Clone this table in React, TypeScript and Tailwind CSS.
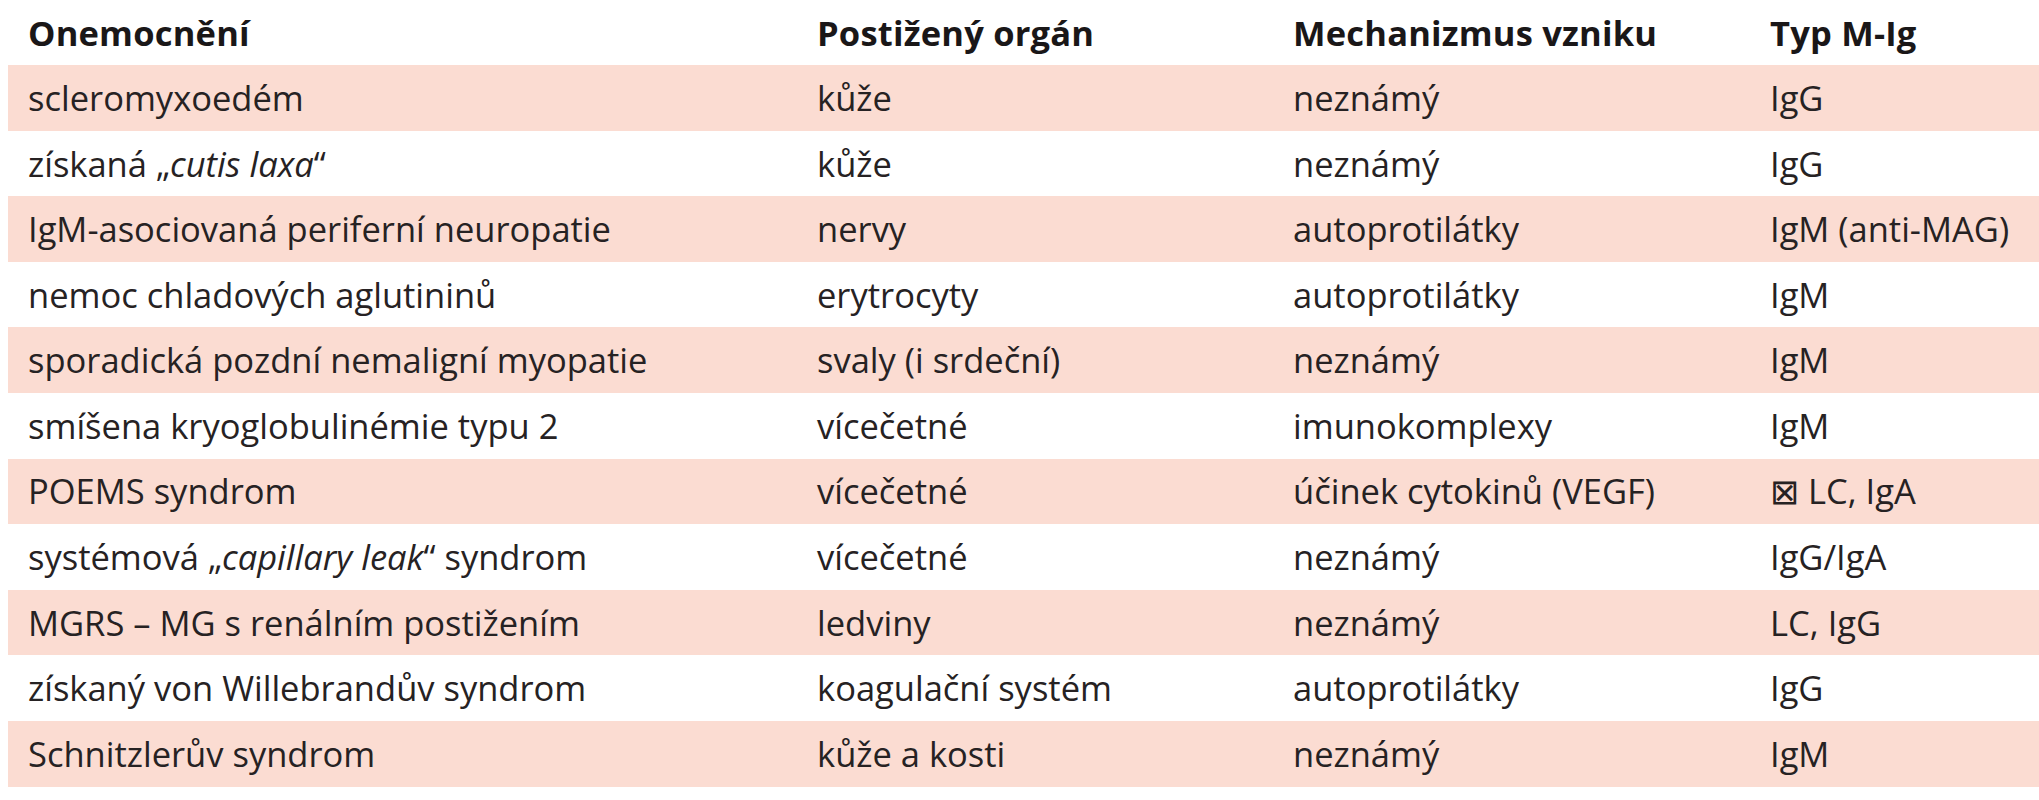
import React from 'react';

type Row = {
  disease: React.ReactNode;
  organ: string;
  mechanism: string;
  type: string;
};

const rows: Row[] = [
  { disease: 'scleromyxoedém', organ: 'kůže', mechanism: 'neznámý', type: 'IgG' },
  {
    disease: (
      <>
        získaná „<i>cutis laxa</i>“
      </>
    ),
    organ: 'kůže',
    mechanism: 'neznámý',
    type: 'IgG',
  },
  { disease: 'IgM-asociovaná periferní neuropatie', organ: 'nervy', mechanism: 'autoprotilátky', type: 'IgM (anti-MAG)' },
  { disease: 'nemoc chladových aglutininů', organ: 'erytrocyty', mechanism: 'autoprotilátky', type: 'IgM' },
  { disease: 'sporadická pozdní nemaligní myopatie', organ: 'svaly (i srdeční)', mechanism: 'neznámý', type: 'IgM' },
  { disease: 'smíšena kryoglobulinémie typu 2', organ: 'vícečetné', mechanism: 'imunokomplexy', type: 'IgM' },
  { disease: 'POEMS syndrom', organ: 'vícečetné', mechanism: 'účinek cytokinů (VEGF)', type: '⊠ LC, IgA' },
  {
    disease: (
      <>
        systémová „<i>capillary leak</i>“ syndrom
      </>
    ),
    organ: 'vícečetné',
    mechanism: 'neznámý',
    type: 'IgG/IgA',
  },
  { disease: 'MGRS – MG s renálním postižením', organ: 'ledviny', mechanism: 'neznámý', type: 'LC, IgG' },
  { disease: 'získaný von Willebrandův syndrom', organ: 'koagulační systém', mechanism: 'autoprotilátky', type: 'IgG' },
  { disease: 'Schnitzlerův syndrom', organ: 'kůže a kosti', mechanism: 'neznámý', type: 'IgM' },
];

const cols = 'grid grid-cols-[789px_476px_477px_1fr]';

export default function App() {
  return (
    <div className="w-[2039px] h-[800px] bg-white pl-2 font-['Open_Sans','Liberation_Sans',sans-serif] text-[34.5px] text-[#262223]">
      <div className={`${cols} h-[65px] items-center font-bold tracking-[0.2px] text-[#1a1718]`}>
        <div className="pl-5">Onemocnění</div>
        <div className="pl-5">Postižený orgán</div>
        <div className="pl-5">Mechanizmus vzniku</div>
        <div className="pl-5">Typ M-Ig</div>
      </div>
      {rows.map((row, i) => (
        <div
          key={i}
          className={`${cols} h-[65.6px] items-center ${i % 2 === 0 ? 'bg-[#fbdcd2]' : 'bg-white'}`}
        >
          <div className="pl-5 whitespace-nowrap">{row.disease}</div>
          <div className="pl-5 whitespace-nowrap">{row.organ}</div>
          <div className="pl-5 whitespace-nowrap">{row.mechanism}</div>
          <div className="pl-5 whitespace-nowrap">{row.type}</div>
        </div>
      ))}
    </div>
  );
}
